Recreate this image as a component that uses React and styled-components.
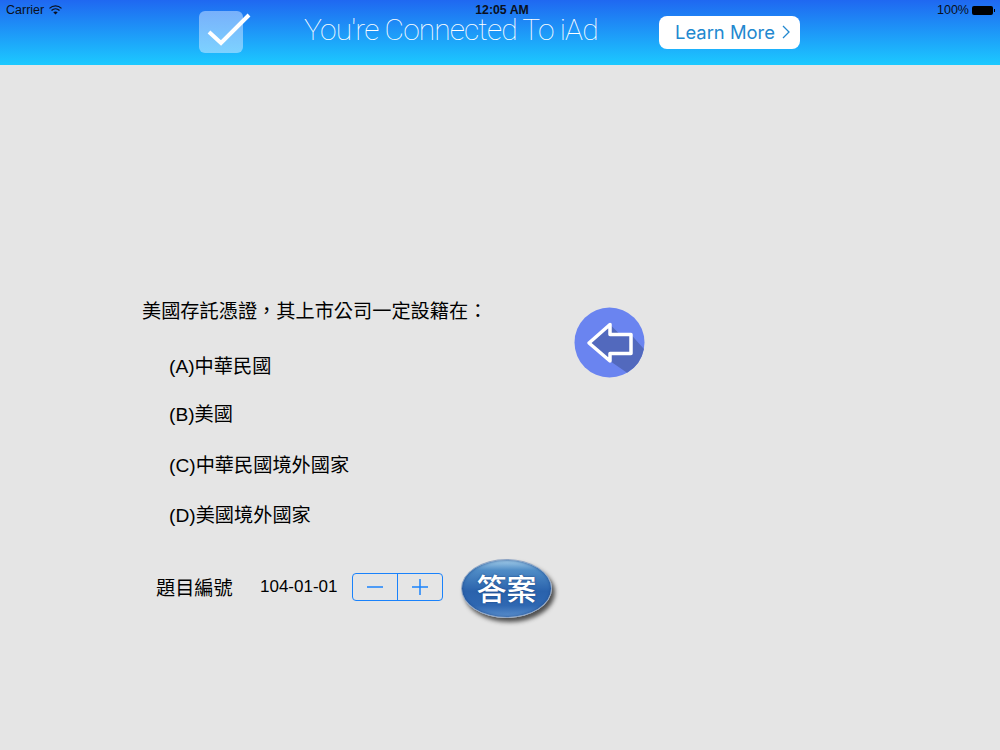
import React from "react"
import styled, { createGlobalStyle } from 'styled-components'

const cjk = `"Liberation Sans", "Noto Sans CJK TC", sans-serif`

const questionText = "美國存託憑證\uFF0C其上市公司一定設籍在\uFF1A"

const GlobalStyle = createGlobalStyle`
  html, body {
    margin: 0;
    padding: 0;
    background: #e5e5e5;
  }
  * {
    box-sizing: border-box;
  }
`

const Page = styled.div`
  width: 1000px;
  height: 750px;
  overflow: hidden;
  background: #e5e5e5;
  font-family: ${cjk};
  color: #000;
`

const Banner = styled.div`
  position: relative;
  height: 65px;
  background: linear-gradient(180deg, #1f68f1 0%, #1cc9ff 100%);
  display: flex;
  align-items: flex-start;
  padding: 11px 0 0 199px;
`

const StatusBar = styled.div`
  position: absolute;
  top: 0;
  left: 0;
  right: 0;
  height: 20px;
  padding: 0 5px 0 6px;
  display: grid;
  grid-template-columns: 1fr auto 1fr;
  align-items: center;
  font-size: 12.5px;
  color: #0a1020;
`

const StatusLeft = styled.div`
  display: flex;
  align-items: center;
  gap: 5px;
`

const StatusRight = styled.div`
  display: flex;
  align-items: center;
  justify-content: flex-end;
  gap: 3px;
`

const Clock = styled.div`
  margin-left: 3px;
  font-weight: 700;
  font-size: 12.3px;
`

const Battery = styled.div`
  position: relative;
  width: 21px;
  height: 9px;
  border-radius: 2px;
  background: #000;
  margin-right: 2px;
  &::after {
    content: "";
    position: absolute;
    right: -2px;
    top: 3px;
    width: 1px;
    height: 3px;
    background: #000;
  }
`

const CheckTile = styled.div`
  width: 44px;
  height: 42px;
  border-radius: 6px;
  background: linear-gradient(180deg, #78b0fb 0%, #7dd2ff 100%);
  position: relative;
  flex-shrink: 0;
`

const CheckMark = styled.svg`
  position: absolute;
  left: 8px;
  top: 0;
`

const BannerTitle = styled.div`
  margin: 1px 0 0 61px;
  width: 355px;
  font-family: Roboto, sans-serif;
  font-weight: 100;
  font-size: 30px;
  line-height: 36px;
  letter-spacing: -0.9px;
  color: #fff;
  white-space: nowrap;
`

const LearnMore = styled.div`
  width: 141px;
  height: 33px;
  margin-top: 5px;
  padding: 0 0 1px 16px;
  border-radius: 8px;
  background: #fff;
  color: #2288cf;
  font-family: Inter, sans-serif;
  font-size: 18.4px;
  display: flex;
  align-items: center;
  gap: 7px;
`

const Content = styled.div`
  display: flex;
  align-items: flex-start;
  padding: 235px 0 0 142px;
`

const Quiz = styled.div`
  width: 432px;
`

const Question = styled.div`
  font-size: 19.2px;
  line-height: 24px;
  white-space: nowrap;
`

const OptionList = styled.div`
  margin: 31px 0 0 27px;
  display: flex;
  flex-direction: column;
`

const Option = styled.div`
  font-size: 19.2px;
  line-height: 24px;
  height: ${(props) => props.$rowHeight}px;
`

const NumberRow = styled.div`
  display: flex;
  align-items: center;
  margin: 27px 0 0 14px;
  height: 64px;
`

const NumberLabel = styled.div`
  width: 104px;
  font-size: 19.2px;
`

const NumberValue = styled.div`
  width: 92px;
  font-size: 17px;
`

const Stepper = styled.div`
  width: 91px;
  height: 28px;
  margin-top: -1px;
  border: 1px solid #1a82fb;
  border-radius: 4px;
  display: flex;
`

const StepButton = styled.div`
  flex: 1;
  display: flex;
  align-items: center;
  justify-content: center;
  & + & {
    border-left: 1px solid #1a82fb;
  }
`

const AnswerButton = styled.div`
  width: 91px;
  height: 59px;
  margin: 2px 0 0 18px;
  padding-bottom: 3px;
  border-radius: 50%;
  border: 1px solid #8fa5c4;
  background: linear-gradient(180deg, #a6cfea 0%, #4f8cc6 18%, #2a62ac 55%, #2f68b2 80%, #5b8fcc 100%);
  box-shadow:
    inset 0 0 3px #1d4a8c,
    3px 4px 4px rgba(30, 30, 30, 0.75);
  color: #fff;
  font-family: "Noto Sans CJK TC", sans-serif;
  font-weight: 500;
  font-size: 30px;
  line-height: 1;
  text-shadow: 0 0 2px #16407f;
  display: flex;
  align-items: center;
  justify-content: center;
  white-space: nowrap;
`

const BackButton = styled.div`
  width: 71px;
  height: 71px;
  margin-top: 7px;
  flex-shrink: 0;
`

function App() {
    return (
        <Page>
            <GlobalStyle />
            <Banner>
                <StatusBar>
                    <StatusLeft>
                        Carrier
                        <svg width="13" height="10" viewBox="0 0 13 10">
                            <path d="M0.5 3.4C4 0 9 0 12.5 3.4" fill="none" stroke="#0a1020" strokeWidth="1.3" />
                            <path d="M2.5 5.4C4.8 3.3 8.2 3.3 10.5 5.4" fill="none" stroke="#0a1020" strokeWidth="1.3" />
                            <path d="M6.5 9.6L4.3 7.2C5.6 6.1 7.4 6.1 8.7 7.2Z" fill="#0a1020" />
                        </svg>
                    </StatusLeft>
                    <Clock>12:05 AM</Clock>
                    <StatusRight>
                        100%
                        <Battery />
                    </StatusRight>
                </StatusBar>
                <CheckTile>
                    <CheckMark width="44" height="42" viewBox="0 0 44 42">
                        <path d="M2 21L14 32L42 4" fill="none" stroke="#fff" strokeWidth="4" />
                    </CheckMark>
                </CheckTile>
                <BannerTitle>You're Connected To iAd</BannerTitle>
                <LearnMore>
                    Learn More
                    <svg width="8" height="14" viewBox="0 0 8 14">
                        <path d="M1 1L7 7L1 13" fill="none" stroke="#2288cf" strokeWidth="1.3" />
                    </svg>
                </LearnMore>
            </Banner>
            <Content>
                <Quiz>
                    <Question>{questionText}</Question>
                    <OptionList>
                        <Option $rowHeight={48}>(A)中華民國</Option>
                        <Option $rowHeight={51}>(B)美國</Option>
                        <Option $rowHeight={50}>(C)中華民國境外國家</Option>
                        <Option $rowHeight={24}>(D)美國境外國家</Option>
                    </OptionList>
                    <NumberRow>
                        <NumberLabel>題目編號</NumberLabel>
                        <NumberValue>104-01-01</NumberValue>
                        <Stepper>
                            <StepButton>
                                <svg width="16" height="16" viewBox="0 0 16 16">
                                    <path d="M0 8H16" stroke="#1a82fb" strokeWidth="1.5" />
                                </svg>
                            </StepButton>
                            <StepButton>
                                <svg width="16" height="16" viewBox="0 0 16 16">
                                    <path d="M0 8H16M8 0V16" stroke="#1a82fb" strokeWidth="1.5" />
                                </svg>
                            </StepButton>
                        </Stepper>
                        <AnswerButton>答案</AnswerButton>
                    </NumberRow>
                </Quiz>
                <BackButton>
                    <svg width="71" height="71" viewBox="0 0 71 71">
                        <circle cx="35.5" cy="35.5" r="35" fill="#6a84f0" />
                        <path d="M36 17.5L46 27.5H57L69.9 42A35 35 0 0 1 53 65.8L36 54Z" fill="#5269bd" />
                        <path d="M15 36L36 17.5V27.5H57V46.5H36V54Z" fill="#5269bd" stroke="#fff" strokeWidth="3.5" strokeLinejoin="round" />
                    </svg>
                </BackButton>
            </Content>
        </Page>
    )
}

export default App
